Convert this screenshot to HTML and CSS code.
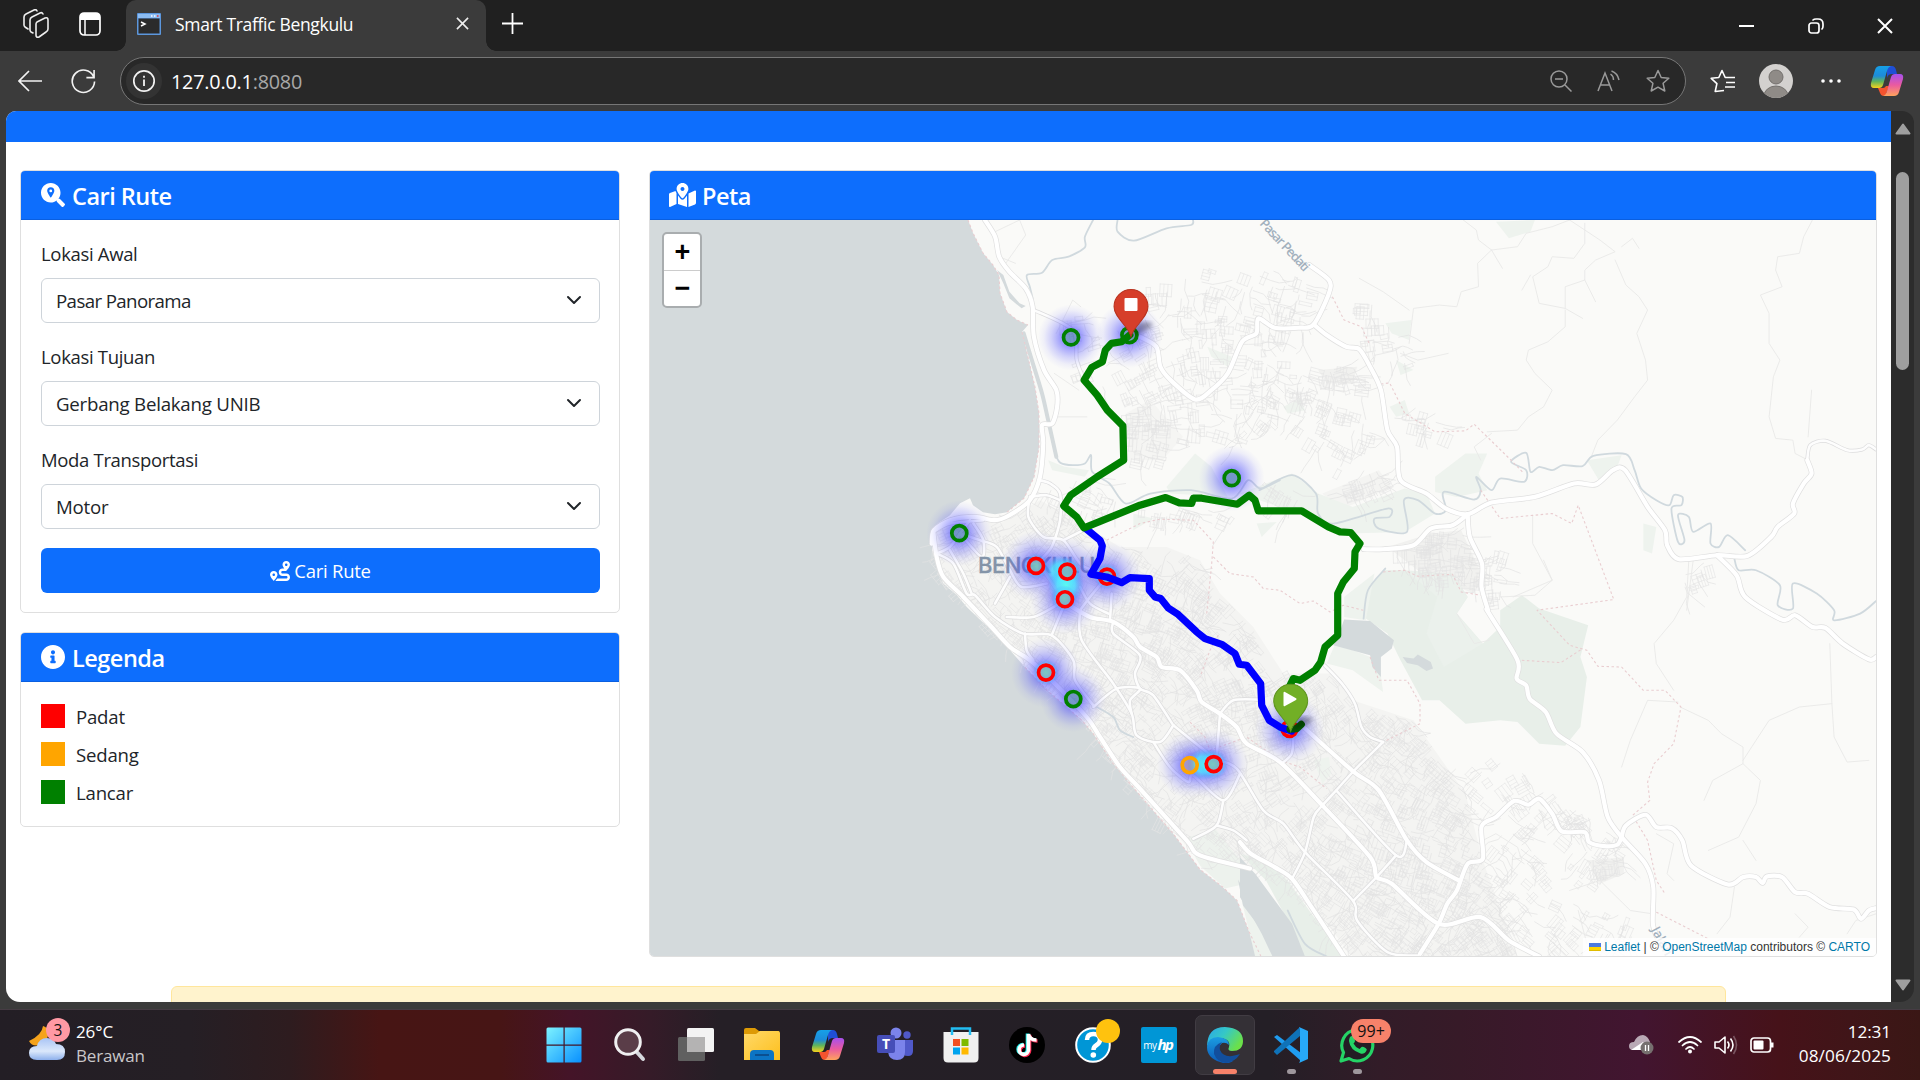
FILE: index.html
```html
<!DOCTYPE html>
<html lang="id">
<head>
<meta charset="utf-8">
<title>Smart Traffic Bengkulu</title>
<link rel="stylesheet" href="styles.css">
</head>
<body>
<svg width="0" height="0" class="defs">
  <defs>
    <linearGradient id="cpA" x1="0" y1="0" x2="0" y2="1"><stop offset="0" stop-color="#16a0e8"/><stop offset=".45" stop-color="#1d8bd8"/><stop offset=".7" stop-color="#5fb45c"/><stop offset="1" stop-color="#f6d21c"/></linearGradient>
    <linearGradient id="cpB" x1="0" y1="0" x2="0" y2="1"><stop offset="0" stop-color="#a650ee"/><stop offset=".5" stop-color="#ea5aa0"/><stop offset="1" stop-color="#ffa35c"/></linearGradient>
    <linearGradient id="win" x1="0" y1="0" x2="1" y2="1"><stop offset="0" stop-color="#7df3ff"/><stop offset="1" stop-color="#0890ff"/></linearGradient>
    <linearGradient id="cloud" x1="0" y1="0" x2="0" y2="1"><stop offset="0" stop-color="#a9c4f5"/><stop offset=".6" stop-color="#dbe8fb"/><stop offset="1" stop-color="#8db0ec"/></linearGradient>
    <linearGradient id="folder" x1="0" y1="0" x2="1" y2="1"><stop offset="0" stop-color="#ffd969"/><stop offset="1" stop-color="#fdbf1c"/></linearGradient>
    <linearGradient id="edgeTop" x1="0" y1="0" x2="1" y2=".5"><stop offset="0" stop-color="#2aa6ea"/><stop offset=".5" stop-color="#35c8c6"/><stop offset="1" stop-color="#6be04a"/></linearGradient>
    <linearGradient id="edgeLow" x1="0" y1="0" x2="0" y2="1"><stop offset="0" stop-color="#1b9de2"/><stop offset="1" stop-color="#0c58b5"/></linearGradient>
    <symbol id="copilot" viewBox="0 0 34 32">
      <path d="M17 1h5q3 0 4 4l1 4h-5q-4 0-5 4z" fill="#1f4fd6"/>
      <path d="M10 1h11q-3 1-4 5l-4 14q-1 3-4 3H4q-4 0-3-5L5 5q1-4 5-4z" fill="url(#cpA)"/>
      <path d="M8 23h5q2 0 3-2l3 0-3 8q-1 2-3 2-2 0-3-3z" fill="#f4532e"/>
      <path d="M24 31H13q3-1 4-5l4-14q1-3 4-3h5q4 0 3 5l-4 13q-1 4-5 4z" fill="url(#cpB)"/>
    </symbol>
  </defs>
</svg>

<div class="window">
  <header class="titlebar">
    <svg class="tb-icon workspaces" viewBox="0 0 26 30"><g fill="none" stroke="#eee" stroke-width="1.6" stroke-linejoin="round" stroke-linecap="round"><path d="M14 13l8-4q3-1 3 2v9q0 2-2 3l-7 5q-3 1-3-2V15q0-1 1-2z"/><path d="M10 24l-2-1q-1-1-1-2V11q0-2 2-3l8-4q2-1 3 1M5 20l-3-2q-1-1-1-2V8q0-2 2-3l8-4q2-1 3 1"/></g></svg>
    <svg class="tb-icon vtabs" viewBox="0 0 22 24"><rect x="1" y="1" width="20" height="22" rx="4" fill="none" stroke="#fff" stroke-width="1.7"/><path d="M1 8V5q0-4 4-4h12q4 0 4 4v3z" fill="#fff"/><path d="M6 8v15" stroke="#fff" stroke-width="1.5"/></svg>
    <div class="tab">
      <svg class="favicon" viewBox="0 0 24 22"><rect width="24" height="22" rx="1" fill="#5c97dd"/><rect x="1" y="1" width="22" height="4" fill="#8cbcf2"/><path d="M14 3h1.500M17 3h1.500" stroke="#fff" stroke-width="1.500"/><path d="M20 3h1.500" stroke="#e23a3a" stroke-width="1.500"/><rect x="1.500" y="5.500" width="21" height="15" fill="#2b2b2b"/><path d="M4 9l4 2-4 2" fill="none" stroke="#fff" stroke-width="1.500"/></svg>
      <span class="tab-title">Smart Traffic Bengkulu</span>
      <svg class="tab-close" viewBox="0 0 14 14"><path d="M1 1l12 12M13 1L1 13" stroke="#eee" stroke-width="1.700"/></svg>
    </div>
    <svg class="newtab" viewBox="0 0 20 20"><path d="M10 0v20M0 10h20" stroke="#fff" stroke-width="1.700"/></svg>
    <div class="controls">
      <svg width="16" height="16" viewBox="0 0 16 16"><path d="M0 8h15" stroke="#fff" stroke-width="2"/></svg>
      <svg width="16" height="16" viewBox="0 0 16 16"><g fill="none" stroke="#fff" stroke-width="1.700"><rect x="1" y="5" width="10" height="10" rx="2.500"/><path d="M5 2q1-1 3-1h2q5 0 5 5v2q0 2-1 3" stroke-linecap="round"/></g></svg>
      <svg width="16" height="16" viewBox="0 0 16 16"><path d="M1 1l14 14M15 1L1 15" stroke="#fff" stroke-width="2"/></svg>
    </div>
  </header>

  <nav class="toolbar">
    <svg class="back" viewBox="0 0 24 22"><path d="M24 11H1M11 1L1 11l10 10" fill="none" stroke="#f2f2f2" stroke-width="1.700"/></svg>
    <svg class="reload" viewBox="0 0 26 26"><path d="M23.500 8A11.600 11.600 0 1 0 24.500 13M24 1v8h-8" fill="none" stroke="#f2f2f2" stroke-width="1.700"/></svg>
    <div class="address">
      <span class="site-info"><svg width="24" height="24" viewBox="0 0 24 24"><circle cx="12" cy="12" r="10.200" fill="none" stroke="#f2f2f2" stroke-width="1.700"/><path d="M12 10.500v6.500M12 6.800v2" stroke="#f2f2f2" stroke-width="1.800"/></svg></span>
      <span class="url">127.0.0.1<span>:8080</span></span>
      <div class="address-tools">
        <svg width="22" height="22" viewBox="0 0 22 22"><g fill="none" stroke="#9a9a9a" stroke-width="1.500"><circle cx="9" cy="9" r="8"/><path d="M5 9h8M15 15l6.500 6.500"/></g></svg>
        <svg width="24" height="22" viewBox="0 0 24 22"><g fill="none" stroke="#9a9a9a" stroke-width="1.500"><path d="M1 21L8 3l7 18M3.500 15h9M13.500 4q3 2 3 6M14.500 1q6 2 7.500 9"/></g></svg>
        <svg width="24" height="24" viewBox="0 0 24 24"><path d="M12 1.500l3.200 7 7.600.8-5.700 5 1.700 7.700L12 18.200 5.200 22l1.700-7.700-5.700-5 7.600-.8z" fill="none" stroke="#9a9a9a" stroke-width="1.500" stroke-linejoin="round"/></svg>
      </div>
    </div>
    <div class="toolbar-right">
      <svg width="26" height="24" viewBox="0 0 26 24"><path d="M14 21.500L5.200 22.500l1.700-7.900L1.200 9.300l7.600-.8L12 1.500l3.200 7H25M16 13.500h9M15 18h10" fill="none" stroke="#fff" stroke-width="1.600" stroke-linejoin="round"/></svg>
      <svg width="34" height="34" viewBox="0 0 34 34"><clipPath id="av"><circle cx="17" cy="17" r="17"/></clipPath><g clip-path="url(#av)"><rect width="34" height="34" fill="#d3d1cf"/><circle cx="17" cy="13" r="7" fill="#8f8b87" stroke="#73706d"/><ellipse cx="17" cy="32" rx="12" ry="10" fill="#8f8b87" stroke="#73706d"/></g></svg>
      <svg width="20" height="4" viewBox="0 0 20 4"><g fill="#fff"><circle cx="2" cy="2" r="1.800"/><circle cx="10" cy="2" r="1.800"/><circle cx="18" cy="2" r="1.800"/></g></svg>
      <svg width="34" height="32"><use href="#copilot"/></svg>
    </div>
  </nav>

  <div class="viewport">
    <main class="page">
      <div class="navband"></div>
      <div class="columns">
        <aside class="sidebar">
          <section class="card">
            <h5 class="card-header"><svg width="24" height="24" viewBox="0 0 512 512"><path fill="#fff" d="M505 442.700L405.300 343c-4.500-4.500-10.600-7-17-7H372c27.600-35.300 44-79.700 44-128C416 93.100 322.900 0 208 0S0 93.100 0 208s93.100 208 208 208c48.300 0 92.700-16.400 128-44v16.300c0 6.400 2.500 12.500 7 17l99.700 99.700c9.400 9.400 24.600 9.400 33.900 0l28.300-28.300c9.400-9.400 9.400-24.600.1-34z"/><path fill="#0d6efd" d="M208 88a76 76 0 0 0-76 76c0 46 76 150 76 150s76-104 76-150a76 76 0 0 0-76-76z"/><circle cx="208" cy="168" r="30" fill="#fff"/></svg><span>Cari Rute</span></h5>
            <div class="card-body form">
              <label>Lokasi Awal</label>
              <div class="select tight">Pasar Panorama<svg viewBox="0 0 16 16"><path fill="none" stroke="#212529" stroke-linecap="round" stroke-linejoin="round" stroke-width="2" d="m2 5 6 6 6-6"/></svg></div>
              <label>Lokasi Tujuan</label>
              <div class="select">Gerbang Belakang UNIB<svg viewBox="0 0 16 16"><path fill="none" stroke="#212529" stroke-linecap="round" stroke-linejoin="round" stroke-width="2" d="m2 5 6 6 6-6"/></svg></div>
              <label>Moda Transportasi</label>
              <div class="select">Motor<svg viewBox="0 0 16 16"><path fill="none" stroke="#212529" stroke-linecap="round" stroke-linejoin="round" stroke-width="2" d="m2 5 6 6 6-6"/></svg></div>
              <button class="btn"><svg width="20" height="20" viewBox="0 0 512 512"><path fill="#fff" d="M416 320h-96c-17.600 0-32-14.400-32-32s14.400-32 32-32h96s96-107 96-160-43-96-96-96-96 43-96 96c0 25.500 22.200 63.400 45.300 96H320c-52.900 0-96 43.100-96 96s43.100 96 96 96h96c17.600 0 32 14.400 32 32s-14.400 32-32 32H185.500c-16 24.800-33.800 47.700-47.300 64H416c52.900 0 96-43.100 96-96s-43.100-96-96-96zm0-256c17.700 0 32 14.300 32 32s-14.300 32-32 32-32-14.300-32-32 14.300-32 32-32zM96 256c-53 0-96 43-96 96s96 160 96 160 96-107 96-160-43-96-96-96zm0 128c-17.700 0-32-14.300-32-32s14.300-32 32-32 32 14.300 32 32-14.300 32-32 32z"/></svg>Cari Rute</button>
            </div>
          </section>
          <section class="card">
            <h5 class="card-header"><svg width="24" height="24" viewBox="8 8 496 496"><path fill="#fff" d="M256 8C119 8 8 119.100 8 256c0 137 111 248 248 248s248-111 248-248C504 119.100 393 8 256 8zm0 110c23.200 0 42 18.800 42 42s-18.800 42-42 42-42-18.800-42-42 18.800-42 42-42zm56 254c0 6.600-5.400 12-12 12h-88c-6.600 0-12-5.400-12-12v-24c0-6.600 5.400-12 12-12h12v-64h-12c-6.600 0-12-5.400-12-12v-24c0-6.600 5.400-12 12-12h64c6.600 0 12 5.400 12 12v100h12c6.600 0 12 5.400 12 12z"/></svg><span>Legenda</span></h5>
            <ul class="card-body legend">
              <li><i class="red"></i>Padat</li>
              <li><i class="orange"></i>Sedang</li>
              <li><i class="green"></i>Lancar</li>
            </ul>
          </section>
        </aside>
        <section class="card map-card">
          <h5 class="card-header"><svg width="27" height="24" viewBox="0 0 576 512"><path fill="#fff" d="M288 0c-69.590 0-126 56.410-126 126 0 56.260 82.350 158.800 113.900 196.020 6.390 7.540 17.820 7.540 24.200 0C331.650 284.800 414 182.260 414 126 414 56.410 357.590 0 288 0zm0 168c-23.200 0-42-18.800-42-42s18.800-42 42-42 42 18.800 42 42-18.800 42-42 42zM20.120 215.950A32 32 0 0 0 0 245.660v250.320c0 11.320 11.430 19.060 21.940 14.860L160 448V214.920c-8.840-15.980-16.070-31.540-21.250-46.420zM288 359.670c-14.070 0-27.380-6.180-36.510-16.960-19.660-23.200-40.570-49.620-59.490-76.720v182l192 64V266c-18.920 27.090-39.820 53.520-59.490 76.720-9.130 10.770-22.440 16.950-36.510 16.950zm266.060-198.510L416 224v288l139.880-55.950A32 32 0 0 0 576 426.340V176.020c0-11.320-11.430-19.060-21.940-14.860z"/></svg><span>Peta</span></h5>
          <div class="map">
            <svg id="map" viewBox="650 220 1226 735.500" preserveAspectRatio="none"></svg>
            <div class="zoom-control"><span>+</span><span>−</span></div>
            <div class="attribution"><svg width="12" height="8" viewBox="0 0 12 8"><path fill="#4c7be1" d="M0 0h12v4H0z"/><path fill="#ffd500" d="M0 4h12v3H0z"/><path fill="#e0bc00" d="M0 7h12v1H0z"/></svg> <a>Leaflet</a> | © <a>OpenStreetMap</a> contributors © <a>CARTO</a></div>
          </div>
        </section>
      </div>
      <div class="alert"></div>
    </main>
    <div class="scrollbar">
      <svg width="16" height="12" viewBox="0 0 16 12"><path d="M8 1.500L14.500 10.500h-13z" fill="#9f9f9f" stroke="#9f9f9f" stroke-width="2" stroke-linejoin="round"/></svg>
      <div class="thumb"></div>
      <svg width="16" height="12" viewBox="0 0 16 12"><path d="M8 10.500L14.500 1.500h-13z" fill="#9f9f9f" stroke="#9f9f9f" stroke-width="2" stroke-linejoin="round"/></svg>
    </div>
  </div>
</div>

<footer class="taskbar">
  <div class="weather">
    <div class="weather-icon">
      <svg width="38" height="38" viewBox="0 0 38 38"><path d="M15 2q-1 9-14 15 3 6 11 4 9-3 8-14-1-4-5-5z" fill="#f5a31c"/><path d="M9 36q-8 0-8-7t8-7q2-8 10-8 7 0 9 6 9 0 9 8t-8 8z" fill="url(#cloud)"/></svg>
      <span class="badge">3</span>
    </div>
    <div class="weather-text"><b>26°C</b><span>Berawan</span></div>
  </div>
  <div class="apps">
    <div class="app"><svg viewBox="0 0 36 36"><path d="M2 .5h15.500v17H.5V2Q.5.500 2 .5zM18.700.5H34Q35.500.500 35.500 2v15.500H18.700zM.5 18.700h17v16.800H2Q.5 35.500.500 34zM18.700 18.700h16.800V34q0 1.500-1.500 1.500H18.700z" fill="url(#win)"/></svg></div>
    <div class="app"><svg viewBox="0 0 36 36"><path d="M23 23l8 9" stroke="#d5d7dc" stroke-width="4" stroke-linecap="round"/><circle cx="16" cy="15" r="12.300" fill="#5a3d48" stroke="#f0f0f1" stroke-width="3"/></svg></div>
    <div class="app"><svg viewBox="0 0 36 36"><rect x="9" y="1" width="27" height="24" rx="1.500" fill="#f3f3f3"/><rect y="10" width="27" height="24" rx="1.500" fill="#606060"/><path d="M9 10h18v15H9z" fill="#b4b3b3"/></svg></div>
    <div class="app"><svg viewBox="0 0 36 36"><path d="M0 3q0-2 2-2h9l4 3h20v9H0z" fill="#dd9a05"/><path d="M0 7h12l4-3h18q2 0 2 2v27H0z" fill="url(#folder)"/><path d="M6 33v-6q0-4 4-4h16q4 0 4 4v6z" fill="#0c74c4"/><path d="M11 28h14" stroke="#0b4f90" stroke-width="2"/></svg></div>
    <div class="app"><svg viewBox="0 0 36 36"><use href="#copilot" x="1" y="2" width="34" height="32"/></svg></div>
    <div class="app"><svg viewBox="0 0 36 36"><circle cx="19" cy="6" r="5.500" fill="#7b83eb"/><circle cx="30" cy="8" r="3.700" fill="#5059c9"/><path d="M25 13h11v11q0 5-5 5-6 0-6-6z" fill="#5059c9"/><path d="M11 13h17v12q0 8-8 8t-9-8z" fill="#7b83eb"/><rect y="8" width="18" height="18" rx="2" fill="#464eb8"/><text x="9" y="22" text-anchor="middle" class="t-letter">T</text></svg></div>
    <div class="app"><svg viewBox="0 0 36 36"><path d="M9 8V1.500h18V8" fill="none" stroke="#22bdf2" stroke-width="2.500"/><path d="M.5 5h35v26q0 4.500-4.500 4.500H5Q.5 35.500.500 31z" fill="#f0f0f0"/><path d="M10 12h7v7h-7z" fill="#f25022"/><path d="M18.500 12h7v7h-7z" fill="#7fba00"/><path d="M10 20.500h7v7h-7z" fill="#00a4ef"/><path d="M18.500 20.500h7v7h-7z" fill="#ffb900"/><path d="M9 5v3M27 5v3" stroke="#22bdf2" stroke-width="2.500"/></svg></div>
    <div class="app"><svg viewBox="0 0 36 36"><circle cx="18" cy="18" r="18" fill="#000"/><g fill="none" stroke-width="3.600"><path d="M18.500 6.500v16a4.700 4.700 0 1 1-4.500-5M18.500 7q1 6 8 6" stroke="#25f4ee"/><path d="M20.500 8v16a4.700 4.700 0 1 1-4.500-5M20.500 8q1 6 8 6" stroke="#fe2c55"/><path d="M19.500 7v16a4.700 4.700 0 1 1-4.500-5M19.500 7q1 6 8 6" stroke="#fff"/></g></svg></div>
    <div class="app"><svg viewBox="0 0 36 36"><circle cx="18" cy="18" r="16.800" fill="#0096d6" stroke="#fff" stroke-width="2"/><path d="M12 13q0-6 6.500-6T25 13q0 3-4 5.500-2.500 1.500-2.500 4.500" fill="none" stroke="#fff" stroke-width="4.500"/><circle cx="18.300" cy="28" r="2.800" fill="#fff"/></svg><i class="dot"></i></div>
    <div class="app"><div class="hp"><span>my</span><b>hp</b></div></div>
    <div class="app active"><svg viewBox="0 0 36 36"><path d="M0 20Q0 0 18 0q18 1 18 14 0 10-11 10-5 0-3-4 2-8-9-9Q2 11 0 20z" fill="url(#edgeTop)"/><path d="M0 20q1-10 11-10 11 1 11 8-3-3-7-2-8 7 3 15 4 3 8 3-6 4-13 1Q0 31 0 20z" fill="url(#edgeLow)"/><path d="M15 15q-3 3-2 8 3 7 12 6 5-1 8-2-5 8-14 9-9-1-12-9-1-9 8-12z" fill="#124e9c"/></svg><u class="wide"></u></div>
    <div class="app"><svg viewBox="0 0 36 36"><path d="M1 10l3-2L28 26v8z" fill="#1f9cf0"/><path d="M1 25l3 3L27 9V0L1 24z" fill="#0f72b8"/><path d="M26 0l9 4v28l-9 4q1-1 1-3V3q0-2-1-3z" fill="#27a9f8"/></svg><u></u></div>
    <div class="app"><svg viewBox="0 0 36 36"><path d="M2 34l2.500-8.500A15.500 15.500 0 1 1 10 31.500z" fill="#231d24" stroke="#25d366" stroke-width="3.200" stroke-linejoin="round"/><path d="M11 10q2-2 4 0l1 4q0 1-1.500 2.500 2 4 6 5.500l2-2q1-1 4 1 2 1 1 2.500-2 4-6 3Q11 23 10 14q0-2 1-4z" fill="#25d366"/></svg><i class="count">99+</i><u></u></div>
  </div>
  <div class="tray">
    <svg class="onedrive" width="26" height="20" viewBox="0 0 26 20"><path d="M4 15q-4 0-4-4t5-4q3-7 9-7 5 1 7 7v8z" fill="#b9a9b5"/><path d="M2 15l12-8 6 8z" fill="#fff"/><circle cx="18" cy="13" r="6.500" fill="#76706f"/><path d="M16.500 10v6M19.500 10v6" stroke="#fff" stroke-width="1.300"/></svg>
    <svg class="wifi" width="24" height="18" viewBox="0 0 24 18"><g fill="none" stroke="#fff" stroke-width="1.700" stroke-linecap="round"><path d="M1 6q11-10 22 0M4.500 9.500q7.500-7 15 0M8 13q4-4 8 0"/></g><circle cx="12" cy="15.500" r="2" fill="#fff"/></svg>
    <svg class="sound" width="24" height="20" viewBox="0 0 24 20"><g fill="none" stroke="#fff" stroke-width="1.600" stroke-linejoin="round"><path d="M1 7h4l6-5v16l-6-5H1zM13.500 6.500q3 3.500 0 7M16.500 3.500q5 6.500 0 13"/><path d="M19.500 1q6 9 0 18" stroke="#7a5560"/></g></svg>
    <svg class="battery" width="24" height="16" viewBox="0 0 24 16"><rect x="1" y="1" width="19.500" height="14" rx="3" fill="none" stroke="#fff" stroke-width="1.700"/><rect x="3.500" y="3.500" width="10" height="9" rx="1" fill="#fff"/><path d="M22 5.500v5" stroke="#fff" stroke-width="3"/></svg>
    <div class="clock"><span>12:31</span><span>08/06/2025</span></div>
  </div>
</footer>
<script src="map.js"></script>
</body>
</html>
```
FILE: styles.css
```css
* { box-sizing: border-box; }
body { margin: 0; width: 1920px; height: 1080px; overflow: hidden; display: flex; flex-direction: column; background: #3b3b3b; font-family: "Open Sans", "Noto Sans", sans-serif; }
svg { display: block; flex: none; }
.defs { position: absolute; }
.window { height: 1009px; display: flex; flex-direction: column; background: #3b3b3b; }

.titlebar { height: 51px; background: #202020; display: flex; align-items: center; padding-left: 23px; flex: none; }
.workspaces { width: 26px; height: 30px; margin-bottom: 4px; }
.vtabs { width: 22px; height: 24px; margin: 0 0 4px 30px; }
.tab { width: 360px; height: 51px; margin-left: 25px; background: #3b3b3b; border-radius: 10px 10px 0 0; display: flex; align-items: center; padding: 0 17px 4px 11px; position: relative; }
.tab::before, .tab::after { content: ""; position: absolute; bottom: 0; width: 10px; height: 10px; }
.tab::before { left: -10px; background: radial-gradient(circle at 0 0, #202020 9.500px, #3b3b3b 10px); }
.tab::after { right: -10px; background: radial-gradient(circle at 100% 0, #202020 9.500px, #3b3b3b 10px); }
.favicon { width: 24px; height: 22px; }
.tab-title { margin-left: 14px; font-size: 17.500px; letter-spacing: -.33px; color: #fff; flex: 1; white-space: nowrap; }
.tab-close { width: 13px; height: 13px; }
.newtab { width: 21px; height: 21px; margin: 0 0 4px 16px; }
.controls { margin-left: auto; display: flex; gap: 53px; padding-right: 27px; }

.toolbar { height: 60px; display: flex; align-items: center; padding: 0 16px 0 18px; flex: none; }
.back { width: 24px; height: 22px; }
.reload { width: 25px; height: 25px; margin-left: 29px; }
.address { width: 1566px; height: 48px; margin-left: 24px; border: 1.500px solid #767676; border-radius: 24px; background: #282828; display: flex; align-items: center; padding: 0 15px 0 5px; }
.site-info { width: 36px; height: 36px; border-radius: 50%; background: #333; display: grid; place-items: center; }
.url { margin-left: 9px; font-size: 19.800px; letter-spacing: -.2px; color: #fff; }
.url span { color: #a8a8a8; }
.address-tools { margin-left: auto; display: flex; align-items: center; gap: 25px; }
.toolbar-right { margin-left: auto; display: flex; align-items: center; }
.toolbar-right svg:nth-child(2) { margin-left: 23px; }
.toolbar-right svg:nth-child(3) { margin-left: 28px; }
.toolbar-right svg:nth-child(4) { margin-left: 29px; }

.viewport { height: 891px; margin: 0 6px; display: flex; border-radius: 10px 12px 14px 14px; overflow: hidden; }
.page { width: 1885px; height: 891px; background: #fff; overflow: hidden; display: flex; flex-direction: column; }
.navband { height: 31px; background: #0d6efd; flex: none; }
.columns { display: grid; grid-template-columns: 600px 1228px; gap: 29px; padding: 28px 14px 0; flex: none; height: 815px; }
.sidebar { display: flex; flex-direction: column; gap: 19px; }
.card { border: 1px solid #dfdfdf; border-radius: 5px; overflow: hidden; background: #fff; }
.card-header { margin: 0; height: 49px; background: #0d6efd; border-bottom: 1px solid #0a5fe0; color: #fff; font-size: 23.500px; font-weight: 600; letter-spacing: -.5px; display: flex; align-items: center; gap: 7px; padding: 0 19px 0 20px; }
.card-header span { padding-top: 2px; }
.map-card .card-header { padding-left: 19px; gap: 6px; }
.card-body { padding: 19px 19px 19px 20px; }
.form { display: flex; flex-direction: column; color: #212529; font-size: 18.500px; letter-spacing: -.33px; height: 392px; padding-top: 22px; }
.form label { height: 26px; line-height: 24px; margin-bottom: 10px; }
.select { height: 45px; border: 1px solid #ced4da; border-radius: 6px; display: flex; align-items: center; justify-content: space-between; padding: 0 17px 0 14px; margin-bottom: 22px; font-size: 18.700px; letter-spacing: -.24px; }
.select.tight { letter-spacing: -.62px; }
.select svg { width: 16px; height: 16px; margin-bottom: 2px; }
.btn { height: 45px; margin-top: -3px; border: 0; border-radius: 6px; background: #0d6efd; color: #fff; font: inherit; letter-spacing: -.25px; display: flex; align-items: center; justify-content: center; gap: 4px; }
.legend { margin: 0; list-style: none; height: 144px; padding-top: 22px; display: flex; flex-direction: column; gap: 14px; font-size: 18.600px; letter-spacing: -.2px; color: #212529; }
.legend li { display: flex; align-items: center; height: 24px; }
.legend i { width: 24px; height: 24px; margin-right: 11px; }
.red { background: red; } .orange { background: orange; } .green { background: green; }
.map-card { height: 787px; }
.map { position: relative; height: 736px; background: #d4dadc; }
.map > svg { width: 1226px; height: 736px; }
.zoom-control { position: absolute; left: 12px; top: 12px; width: 40px; border: 2px solid #a9adaf; border-radius: 5px; background: #fff; display: flex; flex-direction: column; }
.zoom-control span { height: 36px; padding-left: 1px; display: grid; place-items: center; font: bold 27px/30px "Liberation Sans", sans-serif; color: #000; }
.zoom-control span + span { border-top: 1px solid #ccc; height: 36px; padding-bottom: 2px; }
.attribution { position: absolute; right: 0; bottom: 0; height: 18px; padding: 0 6px; background: rgba(255,255,255,.8); font: 12px/19px "Liberation Sans", sans-serif; color: #333; white-space: nowrap; }
.attribution svg { display: inline; }
.attribution a { color: #0078a8; }
.alert { margin: 29px 165px 0 165px; height: 40px; flex: none; border: 1px solid #ffe69c; border-radius: 6px; background: #fff3cd; }
.scrollbar { width: 23px; background: #2c2c2c; display: flex; flex-direction: column; align-items: center; padding: 12px 0 11px; }
.thumb { width: 13px; height: 198px; margin-top: 37px; border-radius: 7px; background: #9f9f9f; }
.scrollbar svg:last-child { margin-top: auto; }

.road-label { font: 600 13px "Open Sans", sans-serif; fill: #a2b0bd; }
.city-label { font: 500 22px Inter, "Open Sans", sans-serif; letter-spacing: .8px; fill: #8394a8; stroke: #8394a8; stroke-width: .3px; }

.taskbar { height: 71px; display: flex; align-items: center; border-top: 1px solid #463c44; position: relative; background: linear-gradient(90deg, #231e25 0, #251f25 190px, #2e1c1f 290px, #471514 380px, #471515 500px, #441428 570px, #351b28 650px, #251f26 720px, #241f26 1270px, #321c28 1380px, #371a28 1460px, #421530 1640px, #461219 1780px, #401518 1850px, #3a1715 1920px); }
.weather { display: flex; width: 302px; padding-left: 28px; }
.weather-icon { position: relative; width: 38px; height: 44px; padding-top: 3px; margin-top: -2px; }
.badge { position: absolute; left: 18px; top: -3px; width: 24px; height: 24px; border-radius: 50%; background: #ff99a4; color: #111; font-size: 15.500px; line-height: 24px; text-align: center; }
.weather-text { margin: -3px 0 0 10px; display: flex; flex-direction: column; font-size: 17px; line-height: 24px; letter-spacing: -.18px; color: #c9c7c9; }
.weather-text b { font-weight: 400; color: #fff; letter-spacing: -.1px; }
.apps { display: flex; margin-left: 229px; }
.app { width: 66.100px; height: 60px; display: grid; place-items: center; position: relative; }
.app svg { width: 36px; height: 36px; }
.active::before { content: ""; position: absolute; inset: 0 3px; border: 1px solid #413c43; border-radius: 7px; background: #343036; }
.active svg { position: relative; }
.t-letter { font: bold 14px "Open Sans", sans-serif; fill: #fff; }
.hp { width: 36px; height: 36px; border-radius: 2px; background: #0096d6; color: #fff; display: flex; align-items: center; justify-content: center; font-size: 10px; letter-spacing: -.6px; }
.hp b { font-size: 15px; font-style: italic; letter-spacing: -1.500px; padding: 0 2px 2px 1px; }
.dot { position: absolute; left: 36px; top: 4px; width: 24px; height: 24px; border-radius: 50%; background: #ffc20e; }
.count { position: absolute; left: 27px; top: 4px; width: 40px; height: 24px; border-radius: 12px; background: #f7826a; color: #111; font-size: 16px; font-style: normal; line-height: 24px; text-align: center; letter-spacing: .1px; }
.app u { position: absolute; left: 29px; bottom: 1px; width: 9px; height: 5px; border-radius: 3px; background: #9e979d; }
.app u.wide { left: 21px; width: 24px; background: #f7826a; }
.tray { margin-left: auto; display: flex; align-items: center; padding-right: 29px; }
.wifi { margin-left: 23px; }
.sound { margin-left: 12px; }
.battery { margin-left: 12px; }
.clock { width: 101px; margin: -3px 0 0 16px; display: flex; flex-direction: column; align-items: flex-end; font-size: 17.200px; line-height: 24px; letter-spacing: .1px; color: #fff; }
.clock span:first-child { letter-spacing: -.1px; }
```
FILE: map.js
```js
// Survey frames: origin and units per pixel for each block of coordinates.
const FRAMES = {
  A: [640, 160, 2.45, 3], B: [1240, 160, 2.306, 3],
  C: [900, 460, 3, 3], D: [1240, 560, 2.306, 3], P: [0, 0, 1, 1]
};
const map = document.getElementById('map');
const NS = 'http://www.w3.org/2000/svg';
function add(tag, attrs, text) {
  const e = document.createElementNS(NS, tag);
  for (const k in attrs) e.setAttribute(k, attrs[k]);
  if (text) e.textContent = text;
  map.appendChild(e);
  return e;
}
// "A 10,20 30,40 C 5,5" -> list of pixel points
function pts(s) {
  let f = FRAMES.P;
  const out = [];
  for (const t of s.trim().split(/\s+/)) {
    if (FRAMES[t]) { f = FRAMES[t]; continue; }
    const [x, y] = t.split(',').map(Number);
    out.push([f[0] + x / f[2], f[1] + y / f[3]]);
  }
  return out;
}
function straight(s, close) { return 'M' + pts(s).map(p => p.map(v => v.toFixed(1)).join(' ')).join('L') + (close ? 'z' : ''); }
function smooth(s) {
  const p = pts(s);
  let d = 'M' + p[0].join(' ');
  for (let i = 0; i < p.length - 1; i++) {
    const a = p[i - 1] || p[i], b = p[i], c = p[i + 1], e = p[i + 2] || c, k = 7;
    d += `C${b[0] + (c[0] - a[0]) / k} ${b[1] + (c[1] - a[1]) / k} ${c[0] - (e[0] - b[0]) / k} ${c[1] - (e[1] - b[1]) / k} ${c[0]} ${c[1]}`;
  }
  return d;
}
const line = (d, stroke, w, extra) => add('path', Object.assign({ d, fill: 'none', stroke, 'stroke-width': w, 'stroke-linejoin': 'round', 'stroke-linecap': 'round' }, extra));
const area = (s, fill) => add('path', { d: straight(s, true), fill });

const defs = add('defs', {});
defs.innerHTML = `
<radialGradient id="heat"><stop offset="0" stop-color="#3c50ff" stop-opacity=".55"/><stop offset=".3" stop-color="#3c3cff" stop-opacity=".5"/><stop offset=".6" stop-color="#5050ff" stop-opacity=".24"/><stop offset=".82" stop-color="#5050ff" stop-opacity=".07"/><stop offset="1" stop-color="#5a5aff" stop-opacity="0"/></radialGradient>
<radialGradient id="hot"><stop offset="0" stop-color="#5afff0" stop-opacity=".95"/><stop offset=".5" stop-color="#50f0ff" stop-opacity=".75"/><stop offset="1" stop-color="#46a0ff" stop-opacity="0"/></radialGradient>
<filter id="soft"><feGaussianBlur stdDeviation="2"/></filter>`;

// Land
const coast = '968,220 973,233 983,253 993,265 999,275 1000,293 1007,312 1017,320 1028,325 1022,332 1028,357 1035,387 1039,413 1039,447 1034,477 1024,498 1007,512 995,514 983,512 973,505 970,498 960,503 950,515 938,523 932,533 932,550 937,567 943,583 957,595 967,607 988,627 1010,650 1025,667 1047,690 1082,720 1093,733 1113,763 1140,795 1173,833 1200,869 1222,886 1237,900 1249,931 1261,956';
area(coast + ' 1876,956 1876,220', '#fafaf8');

// Built-up ground: outline, number of blocks, main street angle, ground tint
const urban = [
  ['C 110,200 200,180 300,190 420,120 560,200 660,260 800,260 900,300 960,400 1060,500 1150,640 1300,640 D 260,420 400,480 520,700 560,900 640,1188 260,1188 120,960 P 1190,850 1130,778 1085,722 990,625 940,575', 1900, 45, '#f4f4f2'],
  ['A 1180,480 1250,380 1340,340 1400,320 1500,350 B 60,330 150,330 170,500 110,560 160,700 60,800 0,880 A 1400,830 1300,780 1200,720 1110,680', 260, 0, 0],
  ['A 1190,760 1250,720 1330,830 1280,900 1195,900', 45, 15, '#f5f5f3'],
  ['B 150,600 260,600 300,720 320,900 250,1000 120,780 0,860 0,560', 90, 25, 0],
  ['B 190,1000 320,930 350,980 230,1050', 30, -25, '#f4f4f2'],
  ['B 340,1160 440,1120 510,1110 560,1250 540,1300 420,1240', 90, 12, '#f1f1ef'],
  ['D 480,620 620,600 740,720 880,840 860,950 700,1000 620,1150 500,1150', 180, 40, 0],
  ['D 620,1000 760,1020 900,1060 940,1188 640,1188', 50, 20, 0],
  ['D 740,740 810,760 810,810 750,810', 14, 60, 0],
  ['D 800,900 885,890 885,940 830,970', 12, 0, '#f1f1ef'],
  ['B 240,430 320,430 400,600 360,640 280,560', 28, 15, 0],
  ['B 340,740 420,740 500,830 380,830', 15, 30, 0],
  ['B 180,630 270,620 260,670 200,670', 12, 0, '#f1f1ef'],
  ['A 990,980 1100,950 1180,1020 1080,1090 1000,1080', 35, 20, 0],
  ['C 700,150 800,130 1100,180 1150,120 1060,60 1200,90 1220,160 800,190', 36, 5, 0],
  ['A 1010,530 1090,430 1130,600 1060,680', 18, 10, 0],
  ['B 550,1140 620,1180 600,1320 560,1320', 18, 8, 0],
  ['B 1010,1210 1100,1200 1080,1260 1020,1300', 10, 10, 0]
];
urban.forEach(u => u[3] && area(u[0], u[3]));

// Vegetation
const park = '#e8efe9', scrub = '#eef3ee';
[['D 330,30 380,30 440,50 490,40 525,110 500,160 560,250 600,200 600,150 650,105 690,145 803,195 785,290 800,350 785,500 750,556 690,550 640,485 600,480 520,490 460,420 420,420 370,300 340,220 285,170 290,90', park],
 ['D 380,30 455,110 430,220 470,320 560,250 500,160 525,110 490,40', '#ebf1ec'],
 ['D 240,110 310,40 290,180 240,170', scrub], ['D 220,250 320,300 330,395 260,330 200,310', scrub],
 ['D 0,880 60,900 110,960 165,1060 240,1188 145,1188 110,1080 60,960', park], ['D 0,1000 40,1080 75,1188 35,1188', scrub],
 ['P 1185,838 1215,828 1232,850 1260,880 1225,888 1200,865', '#edf2ed'],
 ['D 170,600 205,590 210,640 190,670', scrub],
 ['B 590,185 680,180 670,215 620,235', scrub], ['B 335,490 395,480 390,540 350,520', scrub], ['B 360,600 400,630 370,645', scrub],
 ['B 450,950 520,880 570,880 550,940 570,990 500,1010 450,995', scrub], ['B 0,1000 120,940 180,1000 260,1040 380,985 430,1000 450,1060 380,1115 250,1120 180,1080', scrub],
 ['B 800,900 880,885 870,920 830,965', scrub], ['B 930,1090 960,1100 950,1180 930,1170', scrub],
 ['A 1290,980 1360,880 1400,920 1440,1010 1300,1000', scrub], ['A 1390,560 1450,590 1440,620 1400,590', scrub],
 ['B 100,740 140,715 150,750 110,760', scrub], ['B 345,740 380,720 390,760 360,770', scrub],
 ['C 1070,190 1130,185 1085,230', scrub], ['C 700,160 760,175 700,210', scrub], ['A 1000,900 1040,920 1100,930 1090,950 1010,930', scrub]
].forEach(a => area(a[0], a[1]));

// Neighbourhood streets: small blocks scattered inside each district
let seed = 41;
const rnd = () => (seed = (seed * 16807) % 2147483647) / 2147483647;
const inside = (x, y, poly) => {
  let c = false;
  for (let i = 0, j = poly.length - 1; i < poly.length; j = i++) {
    const a = poly[i], b = poly[j];
    if ((a[1] > y) !== (b[1] > y) && x < (b[0] - a[0]) * (y - a[1]) / (b[1] - a[1]) + a[0]) c = !c;
  }
  return c;
};
urban.forEach(u => {
  const poly = pts(u[0]);
  const xs = poly.map(p => p[0]), ys = poly.map(p => p[1]);
  const x0 = Math.min(...xs), x1 = Math.max(...xs), y0 = Math.min(...ys), y1 = Math.max(...ys);
  let blocks = '', lanes = '', n = 0, guard = 0;
  while (n < u[1] && guard++ < 20000) {
    const x = x0 + rnd() * (x1 - x0), y = y0 + rnd() * (y1 - y0);
    if (!inside(x, y, poly)) continue;
    n++;
    const drift = 16 * Math.sin(x / 47) + 14 * Math.cos(y / 39) + (rnd() - .5) * 12;
    const t = (u[2] + drift + (rnd() < .5 ? 90 : 0)) * Math.PI / 180, co = Math.cos(t), si = Math.sin(t);
    if (rnd() < .5) {
      const len = 5 + rnd() * 9, rows = 2 + Math.floor(rnd() * 3), gap = 2.6 + rnd() * 2;
      for (let r = 0; r < rows; r++) blocks += `M${(x - si * gap * r).toFixed(1)} ${(y + co * gap * r).toFixed(1)}l${(co * len).toFixed(1)} ${(si * len).toFixed(1)}`;
      const h = gap * (rows - 1);
      blocks += `M${x.toFixed(1)} ${y.toFixed(1)}l${(-si * h).toFixed(1)} ${(co * h).toFixed(1)}M${(x + co * len).toFixed(1)} ${(y + si * len).toFixed(1)}l${(-si * h).toFixed(1)} ${(co * h).toFixed(1)}`;
    } else {
      lanes += `M${x.toFixed(1)} ${y.toFixed(1)}`;
      let a = t;
      for (let k = 0; k < 3; k++) {
        const l = 4 + rnd() * 8;
        lanes += `l${(Math.cos(a) * l).toFixed(1)} ${(Math.sin(a) * l).toFixed(1)}`;
        a += (rnd() - .5) * 1.3;
      }
    }
  }
  line(blocks, '#e5e5e5', .65);
  line(lanes, '#e3e3e3', .7);
});

// Country lanes
['B 515,180 545,210 550,240 580,270 605,325', 'B 580,270 640,260 660,220 720,200 760,180', 'B 580,270 548,310 550,380 510,395 500,440 460,435 400,445 390,550', 'B 275,355 330,395 390,450',
 'B 795,190 795,250 770,295 720,290 710,320 675,350 690,430 750,445 790,475', 'B 760,180 830,240 865,275 820,300 795,330 795,360 750,380 750,445', 'B 865,300 890,375 920,410 940,450 915,520 935,600 940,660 910,710 870,780 825,840 810,890',
 'B 880,260 905,235 920,265', 'B 750,450 750,500 710,545 665,570 660,600 680,640 720,690 700,740 665,770 640,810 570,815', 'B 670,345 650,390', 'B 795,360 820,425', 'B 1320,180 1300,230 1290,280 1240,290 1235,330 1250,380 1200,405 1220,460 1220,550 1245,600 1230,650 1220,770 1235,835 1275,840 1280,880 1310,900',
 'B 1318,690 1310,830', 'B 370,580 410,600 480,580', 'B 555,900 540,860 580,820', 'B 675,1065 675,1150 720,1260 630,1310', 'B 1045,1200 1030,1350',
 'D 700,0 720,60 680,105 600,110', 'D 1035,0 1030,110 1000,180 955,250 960,310 1000,390', 'D 1010,425 940,420 900,540 880,620', 'D 1015,440 1080,480 1110,520 1160,560 1160,610 1090,660 1070,720', 'D 1360,250 1365,430 1290,440 1220,480 1190,540 1160,600', 'D 1365,430 1370,530 1400,605 1450,600', 'D 1160,610 1200,660 1190,730 1150,830 1080,870', 'D 1160,840 1190,900', 'D 1140,980 1130,1070 1100,1120', 'D 560,840 590,820 640,860 650,900 600,980', 'D 760,990 830,960 900,1050 950,1060', 'D 780,1050 800,1150', 'D 960,820 1000,850 985,940 1000,960', 'D 1280,1060 1310,1100 1290,1130', 'D 1400,1120 1420,1080 1467,1060', 'D 500,160 540,250 575,240', 'A 870,215 930,180 945,225 890,320', 'A 880,290 920,310', 'A 1020,520 1060,420 1080,440', 'A 1025,770 1095,770', 'A 1015,640 1075,690'
].forEach(s => line(straight(s), '#e9e9e8', .9));

// Water
const water = '#d4dadc';
area('D 240,178 300,182 355,240 350,265 325,290 325,350 305,320 300,285 215,255 225,235', water);
area('D 375,290 400,295 410,283 440,305 445,325 430,332 410,315 385,308', water);
area('D 0,890 35,940 75,1010 120,1090 150,1188 75,1188 50,1120 20,1050 0,1010', water);
area('P 1238,879 1250,900 1270,930 1290,956 1275,956 1262,930 1243,905', water);
area('A 875,330 890,345 905,395 930,430 945,438 935,445 905,415 890,370', water);
['A 1355,180 1350,195 1290,205 1210,242 1170,215 1170,180', 'A 1110,180 1090,230 1090,262 1050,290 1010,300 985,338 948,345 955,380 962,415',
 'A 1020,890 1030,908 1060,915 1090,910 1105,885 1108,935 1150,970 1190,1030 1250,1000 1350,990 1450,1015 1490,960 1520,985 1568,960 B 45,990 120,945 175,1000 180,1060 215,1090 340,1045 345,1070 310,1075 320,1105 385,1115 378,1020 410,1020 450,1060 475,1050 470,995 540,1018 555,990 545,950 580,990 600,955 655,965 660,930 625,905 660,878 670,935 690,920 720,930 745,915 790,918 815,887 890,882 910,930 925,985 960,1020 990,1035 1000,1005 1020,1010 1018,1035 995,1045 1010,1145 1025,1140 1010,1065 1035,1070 1045,1115 1085,1090 1085,1150 1105,1160 1125,1125 1165,1170',
 'B 1140,1195 1150,1230 1190,1230 1245,1275 1240,1335 1275,1345 1275,1270 1330,1300 1370,1350 D 1370,180 1430,160 1467,122', 'D 335,25 295,90 285,175', 'D 110,1050 150,1150 200,1188', 'C 590,740 640,770 660,810 700,830'
].forEach(s => line(smooth(s), '#d0d9de', 1.8));
line(smooth('A 940,520 960,600 985,700 1000,780 1020,890'), water, 4);

// Administrative boundaries
['B 213,410 240,480 280,500 298,550', 'B 325,672 345,668 380,760 450,815 520,812 540,792 625,900 655,940', 'B 555,990 600,1075 720,1060 765,1090 780,1035 862,1318 D 685,150 760,255 800,270 825,318 880,320 930,390 980,390 1017,440 1000,550 955,610 940,665 945,720 905,765 940,840 960,960 980,1000', 'D 960,1055 1080,1135', 'D 650,300 740,307 790,265',
 'C 620,240 720,190 780,177 880,180 940,245 935,310 920,460', 'C 940,290 990,340 1060,350 1090,385 1140,390 1200,430 1240,422 1290,455 1330,435 1390,450', 'D 330,35 380,30 410,48 490,42 510,95 555,105', 'D 300,290 320,360 385,360 415,430 415,490', 'C 955,525 930,570 900,650', 'C 870,785 915,830 930,870 1040,830 1140,900 1200,920 1280,985', 'D 415,490 330,545', coast.split(' ').slice(9, 17).join(' '), coast.slice(0, coast.indexOf('1022,332')), coast.split(' ').slice(32).join(' ')
].forEach(s => line(straight(s), '#e9cdd0', 1.1, { 'stroke-dasharray': '2.5 2.5', 'stroke-linecap': 'butt' }));

// Roads: casing first, then the white surface
const major = [
 'A 845,180 870,230 880,290 905,335 945,385 962,440 965,530 990,630 1020,690 1022,740 1010,790 985,795 988,850 980,950 955,1020 905,1065 870,1080 820,1070 760,1080 720,1110 715,1150',
 'A 1225,530 1265,560 1275,620 1300,660 1360,718 1400,690 1440,640 1475,545 1510,520 1515,475 B 80,503 135,503 170,493 205,400 205,360 160,315',
 'B 170,493 200,525 245,560 275,567 300,620 325,690 340,810 362,860 370,960 430,1000 475,1045 525,1062 580,1027 680,1010 770,970 820,973 860,930 888,930 940,1040 980,1110 985,1155 1012,1197 1100,1185 1170,1187 1225,1130 1240,1100 1278,1060 1275,1030 1300,970 1318,940 1308,900',
 'B 525,1062 530,1130 558,1210 557,1280 572,1350 D 572,155 640,300 638,355 660,375 668,415 705,455 730,520 790,575 828,660 848,770 880,830 935,910 953,980 952,1090 965,1140',
 'B 525,1062 490,1095 440,1105 400,1155 330,1167 285,1167',
 'B 1100,1185 1145,1245 1165,1310 D 1250,178 1280,165 1320,200 1350,203 1390,250 1450,297 1467,290',
 'D 880,830 890,795 935,763 960,800 995,803 1020,840 1040,915 1125,972 1160,950 1190,950 1205,968 1215,948 1250,950 1280,995 1310,1000 1360,1040 1415,1047 1432,1075 1450,1050 1467,1043',
 'D 880,830 870,853 840,857 805,845 795,815 742,813 720,760 690,715 665,733 632,722 590,770 557,798 560,895 525,910 500,990 478,1030 458,1090 415,1180',
 'C 1210,800 D 260,632 320,690 385,840 430,905 505,960',
 'C 500,430 570,470 640,485 700,530 720,560 770,590 785,620 840,630 890,690 905,725 960,760 1010,800 1040,850 1140,905 D 190,735 300,890 315,950 350,970 458,1090 555,1070 620,1140 690,1188',
 'C 100,215 110,290 130,350 190,410 270,495 330,560 390,600 450,655 560,770 600,830 660,920 720,985 860,1140 P 1200,855 1250,868',
 'D 0,845 25,880 80,920 120,955 165,1040 240,1188'
];
const minor = [
 'B 1308,900 1315,855 1350,842 1400,870 1435,868 1450,855 1467,868', 'A 965,450 1060,510 1070,600 1085,650',
 'C 820,795 940,890 1010,925 1090,1050 1150,1090 D 150,875 260,1020 270,1080 340,1175 410,1185',
 'D 330,545 262,632 222,690 190,735 170,770 150,875 120,955', 'D 222,690 360,885 385,840', 'D 360,885 315,950 262,1020', 'D 195,315 235,370 265,430 280,500 300,530 330,545',
 'C 110,280 160,310 200,400 225,405 285,470 370,520 455,525 520,600 525,660 580,735', 'C 150,270 190,340 215,400', 'C 180,220 240,240 290,260 330,330 365,380 440,370', 'C 100,215 150,190 250,180', 'C 110,280 150,260 180,220 210,180', 'C 180,220 245,290 250,240 220,190',
 'C 285,430 330,350', 'C 320,470 400,470 470,435', 'C 540,450 545,540 640,670 695,760 710,825 780,845 820,795',
 'C 640,485 640,520 720,585 705,640 720,685 760,705 820,795', 'C 580,740 650,685 720,685 690,720 695,760', 'C 960,760 950,890', 'C 960,760 1000,720 1080,718',
 'C 420,60 450,70 480,100 480,180 455,260 420,300', 'C 390,110 385,170 430,230 490,240 540,310 580,330', 'C 490,240 550,210', 'C 390,110 440,105 480,120', 'C 540,450 570,410 620,350', 'C 630,480 635,400',
 'C 540,380 570,430 625,460', 'C 760,845 810,920 865,965 880,945 970,1020 1020,940', 'C 970,1020 950,1095 880,1135', 'C 1180,830 1175,880 1145,910', 'C 455,525 490,440', 'C 375,520 380,570 400,600', 'C 430,330 470,390', 'C 950,1095 1000,1110 1040,1140'
];
major.forEach(s => line(smooth(s), '#e0e0e0', 5.6));
minor.forEach(s => line(smooth(s), '#dcdcdd', 4));
minor.forEach(s => line(smooth(s), '#fdfdfd', 2.6));
major.forEach(s => line(smooth(s), '#fff', 4.2));

// Labels
add('text', { class: 'road-label', transform: 'translate(1259 224) rotate(47)', textLength: 66 }, 'Pasar Pedati');
add('text', { class: 'road-label', transform: 'translate(1651 929) rotate(62)' }, 'Jalan');
add('text', { class: 'city-label', x: 978, y: 572.500, textLength: 118 }, 'BENGKULU');

// Traffic heat
const points = [[1071, 337.3, 'green'], [1129.4, 335, 'green'], [1231.7, 478, 'green'], [959.3, 533, 'green'], [1036, 565.7, 'red'], [1067.3, 571.3, 'red'], [1065, 599, 'red'], [1107, 576.3, 'red'], [1046, 672.3, 'red'], [1073.3, 698.7, 'green'], [1189.7, 764.7, 'orange'], [1213.7, 763.7, 'red'], [1289.5, 728.5, 'red']];
points.forEach(p => add('circle', { cx: p[0], cy: p[1], r: p[2] === 'red' ? 35 : 33, fill: 'url(#heat)' }));
[[1060, 571, 16], [1067, 572, 15], [1066, 585, 18], [1064, 598, 13], [1203, 764, 16], [1213, 764, 15], [1036, 566, 13], [1046, 672, 13], [1107, 576, 13], [1289, 728, 13]].forEach(h => add('circle', { cx: h[0], cy: h[1], r: h[2], fill: 'url(#hot)' }));

// Monitoring points and the two routes
points.forEach(p => add('circle', { cx: p[0], cy: p[1], r: 7.5, fill: p[2], 'fill-opacity': .2, stroke: p[2], 'stroke-width': 3.7 }));
line(straight('C 555,203 600,240 607,257 600,295 573,342 620,350 665,367 690,352 748,355 748,390 765,410 782,415 805,443 835,463 890,515 915,535 965,552 1005,580 1018,612 1040,615 1082,670 1085,735 1108,780 1140,800 1175,812'), '#00f', 7.2);
line(straight('A 1200,525 1180,545 1155,550 1140,570 1133,605 1107,622 1088,660 1120,705 1145,750 1183,797 1185,900 1120,950 1055,1005 1038,1037 1070,1070 1088,1103 C 720,135 797,112 838,128 875,130 880,114 905,114 1012,132 1048,105 1065,120 1075,152 1205,152 1285,200 1320,215 1352,217 1380,250 1365,275 1363,325 1330,365 1313,400 1313,525 1275,560 1262,605 1245,630 1200,660 1180,655 1170,675'), 'green', 7.2);
line(straight('C 1170,806 1190,805 1204,792'), '#045c04', 7.2);

// Start and finish pins
function pin(x, y, fill, edge, glyph) {
  add('path', { d: `M${x} ${y}l8-14q12-2 14 2-4 7-22 12z`, fill: '#000', 'fill-opacity': .3, filter: 'url(#soft)' });
  add('path', { d: `M${x} ${y}c-3-11-17-19-17-30a17 17 0 0 1 34 0c0 11-14 19-17 30z`, fill, stroke: edge, 'stroke-width': 1 });
  add('path', { d: glyph, fill: '#fff', stroke: '#fff', 'stroke-width': 2, 'stroke-linejoin': 'round' });
}
pin(1131, 336.500, '#d63e2a', '#b8321f', 'M1125.500 299h11v11h-11z');
pin(1290.700, 731, '#72af26', '#5f9420', 'M1284.500 692.500l11 6.200-11 6.200z');
```
